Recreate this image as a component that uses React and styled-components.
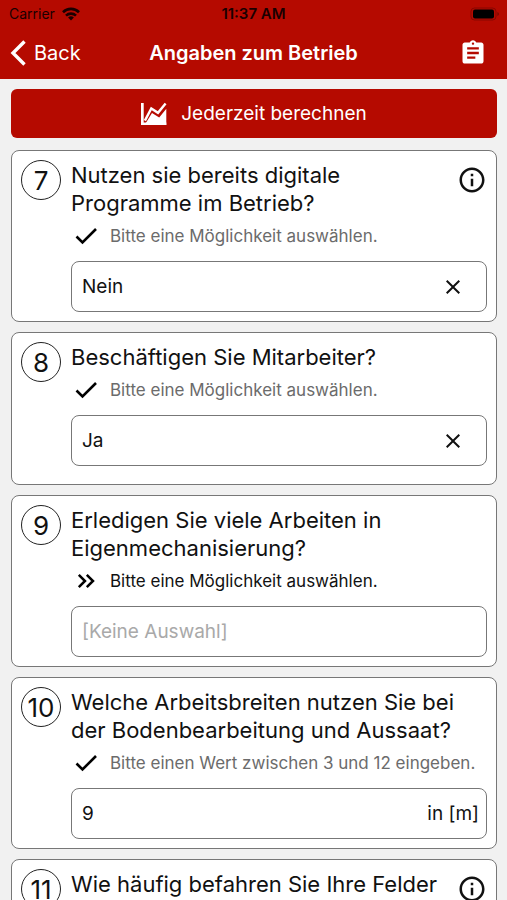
import React, { useId, useState } from 'react'
import styled, { createGlobalStyle } from 'styled-components'
import { MdAssignment, MdClose, MdInfoOutline } from 'react-icons/md'

const questions = [
    { number: 7, title: 'Nutzen sie bereits digitale Programme im Betrieb?', type: 'choice', value: 'Nein', info: true },
    { number: 8, title: 'Beschäftigen Sie Mitarbeiter?', type: 'choice', value: 'Ja' },
    { number: 9, title: 'Erledigen Sie viele Arbeiten in Eigenmechanisierung?', type: 'choice', value: '' },
    { number: 10, title: 'Welche Arbeitsbreiten nutzen Sie bei der Bodenbearbeitung und Aussaat?', type: 'number', value: '9', min: 3, max: 12, unit: 'in [m]' },
    { number: 11, title: 'Wie häufig befahren Sie Ihre Felder', type: 'choice', value: '', info: true },
]

function WifiIcon() {
    return (
        <svg width="18" height="14" viewBox="0 0 18 14" aria-hidden="true">
            <g fill="none" stroke="currentColor" strokeWidth="2.6">
                <path d="M1 5.2a11.4 11.4 0 0 1 16 0" />
                <path d="M4 8.6a7.2 7.2 0 0 1 10 0" />
            </g>
            <path d="M9 13.6l-2.9-3a4.1 4.1 0 0 1 5.8 0z" fill="currentColor" />
        </svg>
    )
}

function BatteryIcon() {
    return (
        <svg width="30" height="14" viewBox="0 0 30 14" aria-hidden="true">
            <rect x="1" y="1" width="25" height="12" rx="3.5" fill="none" stroke="#000" strokeOpacity="0.25" />
            <rect x="3" y="2.5" width="21" height="9" rx="2" fill="#000" />
            <path d="M27.5 5v4a2.2 2.2 0 0 0 0-4z" fill="#000" fillOpacity="0.4" />
        </svg>
    )
}

function BackIcon() {
    return (
        <svg width="17" height="26" viewBox="0 0 17 26" aria-hidden="true">
            <path d="M14.5 1.5L3 13l11.5 11.5" fill="none" stroke="currentColor" strokeWidth="3.4" />
        </svg>
    )
}

function ChartIcon() {
    return (
        <svg width="26" height="24" viewBox="0 0 26 24" aria-hidden="true">
            <path d="M0 1h2.7v19.6h22.6V23H0z" fill="currentColor" />
            <path d="M3.9 18.6L10.3 6.4l6.7 4.4 7.6-9.4" fill="none" stroke="currentColor" strokeWidth="2.4" />
            <path d="M4.8 21L11 11l7.2 4.5 7.1-8.7V23z" fill="currentColor" />
        </svg>
    )
}

function CheckIcon() {
    return (
        <svg width="30" height="28" viewBox="0 0 30 28" aria-hidden="true">
            <path d="M5.5 14.5l6 6L25 7" fill="none" stroke="#000" strokeWidth="2.6" />
        </svg>
    )
}

function DoubleArrowIcon() {
    return (
        <svg width="30" height="28" viewBox="0 0 30 28" aria-hidden="true">
            <path d="M7.8 7.8L14 14l-6.2 6.2M15.8 7.8L22 14l-6.2 6.2" fill="none" stroke="#000" strokeWidth="2.5" />
        </svg>
    )
}

function Question({ question }) {
    const id = useId()
    const [value, setValue] = useState(question.value)
    const isChoice = question.type === 'choice'
    const hint = isChoice
        ? 'Bitte eine Möglichkeit auswählen.'
        : `Bitte einen Wert zwischen ${question.min} und ${question.max} eingeben.`

    return (
        <Card>
            <Number>{question.number}</Number>
            <CardBody>
                <TitleRow>
                    <Title htmlFor={id}>{question.title}</Title>
                    {question.info && <InfoButton type="button" aria-label="Info"><MdInfoOutline /></InfoButton>}
                </TitleRow>
                <Hint $done={value !== ''}>
                    {value !== '' ? <CheckIcon /> : <DoubleArrowIcon />}
                    <span>{hint}</span>
                </Hint>
                <Field>
                    {isChoice
                        ? (
                            <Select id={id} value={value} $empty={value === ''} onChange={(e) => setValue(e.target.value)}>
                                <option value="">[Keine Auswahl]</option>
                                <option>Ja</option>
                                <option>Nein</option>
                            </Select>
                        )
                        : <Input id={id} inputMode="numeric" value={value} onChange={(e) => setValue(e.target.value)} />
                    }
                    {isChoice && value !== '' &&
                        <ClearButton type="button" aria-label="Auswahl löschen" onClick={() => setValue('')}><MdClose /></ClearButton>
                    }
                    {question.unit && <Unit>{question.unit}</Unit>}
                </Field>
            </CardBody>
        </Card>
    )
}

function App() {
    return (
        <Screen>
            <GlobalStyle />
            <Header>
                <StatusBar>
                    <Carrier>Carrier <WifiIcon /></Carrier>
                    <Time>11:37 AM</Time>
                    <Battery><BatteryIcon /></Battery>
                </StatusBar>
                <NavBar>
                    <BackButton type="button"><BackIcon />Back</BackButton>
                    <h1>Angaben zum Betrieb</h1>
                    <SummaryButton type="button" aria-label="Übersicht"><MdAssignment /></SummaryButton>
                </NavBar>
            </Header>
            <Content>
                <CalculateButton type="button"><ChartIcon />Jederzeit berechnen</CalculateButton>
                {questions.map((question) => <Question key={question.number} question={question} />)}
            </Content>
        </Screen>
    )
}

const GlobalStyle = createGlobalStyle`
    * {
        box-sizing: border-box;
    }

    body {
        margin: 0;
        background: #f1f1f1;
        color: #111;
        font-family: Inter, "Liberation Sans", sans-serif;
    }

    button, input, select {
        margin: 0;
        padding: 0;
        border: none;
        background: none;
        color: inherit;
        font: inherit;
    }

    svg {
        flex: none;
    }
`

const Screen = styled.div`
    display: flex;
    flex-direction: column;
    height: 100vh;
`

const Header = styled.header`
    flex: none;
    background: #b50a00;
    color: white;
`

const StatusBar = styled.div`
    display: grid;
    grid-template-columns: 1fr auto 1fr;
    align-items: center;
    height: 27px;
    padding: 0 7px;
    color: #1a0000;
    font-size: 14px;
`

const Carrier = styled.span`
    display: flex;
    align-items: center;
    gap: 7px;
    padding-left: 2px;
`

const Time = styled.span`
    font-size: 15px;
    font-weight: 600;
`

const Battery = styled.span`
    display: flex;
    justify-content: flex-end;
`

const NavBar = styled.nav`
    display: grid;
    grid-template-columns: 1fr auto 1fr;
    align-items: center;
    height: 52px;
    padding: 0 10px;

    h1 {
        margin: 0;
        font-size: 20px;
        font-weight: 600;
    }
`

const BackButton = styled.button`
    display: flex;
    align-items: center;
    gap: 7px;
    font-size: 20px;
    cursor: pointer;
`

const SummaryButton = styled.button`
    display: flex;
    justify-self: end;
    padding: 0 10px;
    font-size: 28px;
    cursor: pointer;
`

const Content = styled.main`
    display: flex;
    flex: 1;
    flex-direction: column;
    gap: 10px;
    min-height: 0;
    padding: 10px 10px 10px 11px;
    overflow-y: auto;
    scrollbar-width: none;
`

const CalculateButton = styled.button`
    display: flex;
    flex: none;
    align-items: center;
    justify-content: center;
    gap: 14px;
    height: 49px;
    margin-bottom: 2px;
    border-radius: 6px;
    background: #b50a00;
    color: white;
    font-size: 19px;
    cursor: pointer;
`

const Card = styled.section`
    display: flex;
    flex: none;
    gap: 10px;
    min-height: 153px;
    padding: 9px;
    border: 1px solid #777;
    border-radius: 8px;
    background: white;
`

const Number = styled.div`
    display: flex;
    flex: none;
    align-items: center;
    justify-content: center;
    width: 40px;
    height: 40px;
    border: 1px solid #222;
    border-radius: 50%;
    font-size: 26px;
`

const CardBody = styled.div`
    flex: 1;
    min-width: 0;
    padding-top: 1px;
`

const TitleRow = styled.div`
    display: flex;
    align-items: flex-start;
    justify-content: space-between;
`

const Title = styled.label`
    font-size: 22px;
    line-height: 28px;
`

const InfoButton = styled.button`
    display: flex;
    flex: none;
    height: 28px;
    padding: 4px 0;
    font-size: 30px;
    cursor: pointer;
`

const Hint = styled.div`
    display: flex;
    align-items: center;
    gap: 9px;
    height: 38px;
    margin-bottom: 6px;
    color: ${({ $done }) => ($done ? '#6b6b6b' : '#111')};
    font-size: 17px;
`

const Field = styled.div`
    display: flex;
    align-items: center;
    height: 51px;
    border: 1px solid #777;
    border-radius: 8px;
    font-size: 19px;
`

const Select = styled.select`
    flex: 1;
    min-width: 0;
    height: 100%;
    padding: 0 10px;
    appearance: none;
    color: ${({ $empty }) => ($empty ? '#a9a9a9' : 'inherit')};
`

const Input = styled.input`
    flex: 1;
    min-width: 0;
    height: 100%;
    padding: 0 10px;
`

const ClearButton = styled.button`
    display: flex;
    padding: 0 21px;
    font-size: 24px;
    cursor: pointer;
`

const Unit = styled.span`
    padding-right: 7px;
`

export default App
